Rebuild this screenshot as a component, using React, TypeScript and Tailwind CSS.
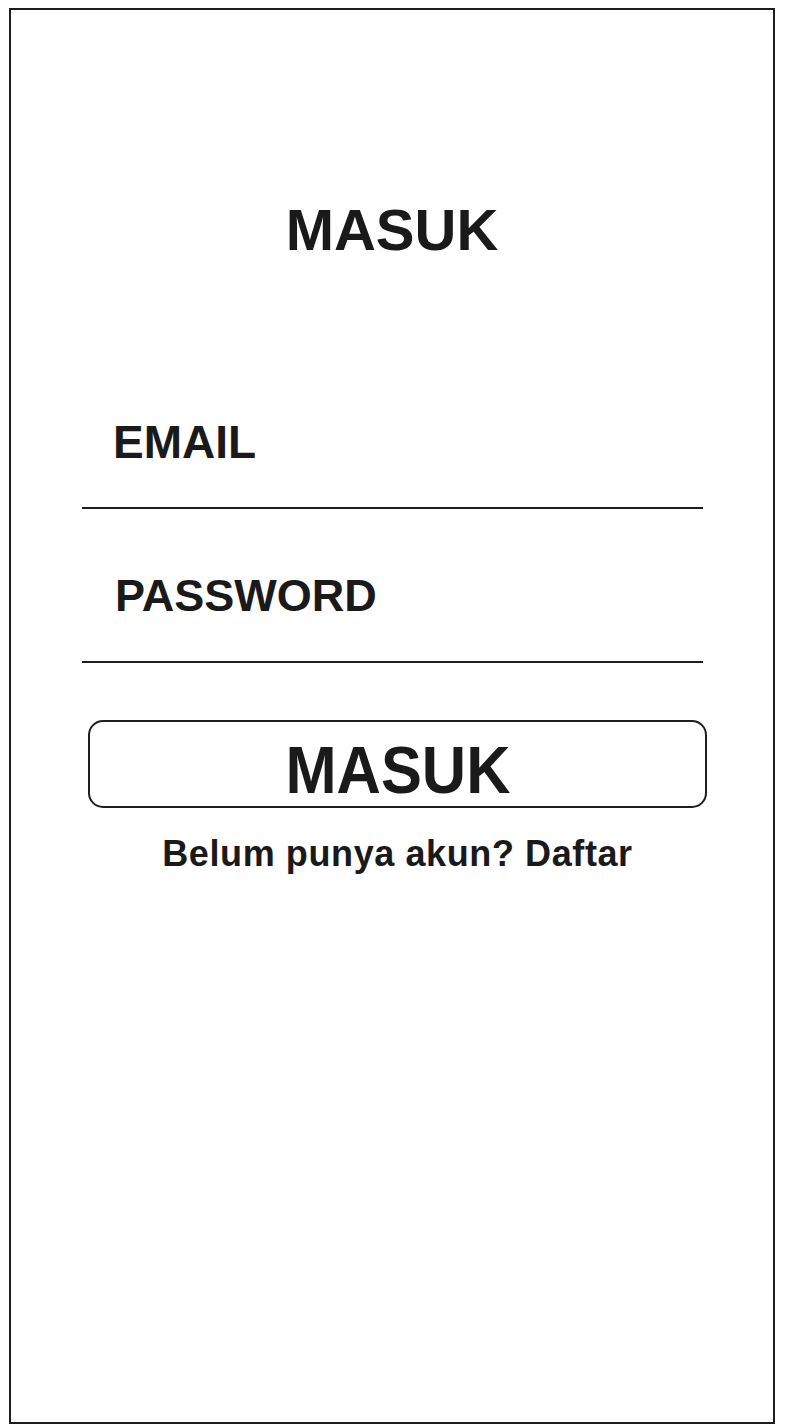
import React from "react";

export default function App() {
  const font = { fontFamily: '"Liberation Sans", Arial, Helvetica, sans-serif' };
  return (
    <div className="w-[789px] h-[1426px] bg-white overflow-hidden" style={font}>
      <div className="ml-[9px] mt-[8px] w-[766px] h-[1416px] border-2 border-[#1e1e1e] flex flex-col text-[#1a1a1a]">
        <div className="pt-[191px] text-center text-[58px] leading-none font-bold">MASUK</div>

        <div className="mt-[160px] ml-[102px] text-[46px] leading-none font-bold">EMAIL</div>
        <div className="mt-[42px] ml-[71px] w-[621px] h-[2px] bg-[#1e1e1e]" />

        <div className="mt-[64px] ml-[104px] text-[45px] leading-none font-bold">PASSWORD</div>
        <div className="mt-[43px] ml-[71px] w-[621px] h-[2px] bg-[#1e1e1e]" />

        <button
          type="button"
          className="mt-[57px] ml-[77px] w-[619px] h-[88px] border-2 border-[#1e1e1e] rounded-[15px] bg-white pt-[15px] flex justify-center items-start"
        >
          <span className="inline-block text-[66px] leading-none font-bold scale-x-[0.93] text-[#1a1a1a]">MASUK</span>
        </button>

        <div className="mt-[28px] ml-[77px] w-[619px] text-center text-[36px] leading-none font-bold tracking-[0.6px]">
          Belum punya akun? Daftar
        </div>
      </div>
    </div>
  );
}
